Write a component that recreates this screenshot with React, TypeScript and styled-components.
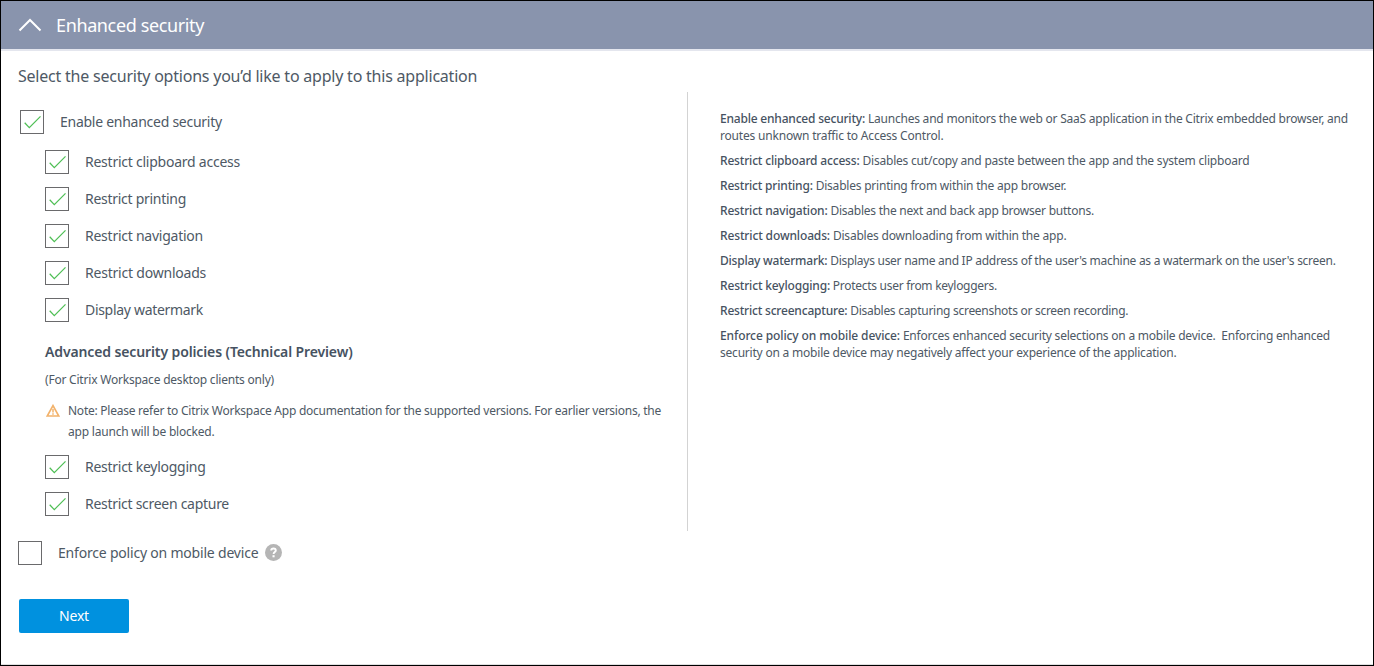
import React, { useState } from 'react';
import styled, { createGlobalStyle } from 'styled-components';

const GlobalStyle = createGlobalStyle`
  *, *::before, *::after { box-sizing: border-box; }
  body { margin: 0; background: #fff; font-family: 'Noto Sans', 'Open Sans', sans-serif; }
`;

const Page = styled.main`
  display: flex;
  flex-direction: column;
  width: 1374px;
  height: 666px;
  border: 1px solid #000;
  background: #fff;
  color: #4e5965;
  box-shadow: inset 0 -1px 0 #dfdfdf;
`;

const Header = styled.header`
  display: flex;
  align-items: center;
  gap: 14px;
  flex: none;
  height: 50px;
  padding-left: 17px;
  background: #8994ad;
  border-bottom: 2px solid #e4e6ee;
  color: #fff;
`;

const Chevron = styled.svg`
  display: block;
  width: 24px;
  height: 16px;
  fill: none;
  stroke: #fff;
  stroke-width: 2;
`;

const Title = styled.h1`
  margin: 0;
  font-size: 18px;
  font-weight: 400;
  line-height: 24px;
  letter-spacing: -0.372px;
`;

const Body = styled.div`
  flex: 1;
  padding: 15px 0 0 17px;
`;

const Intro = styled.p`
  margin: 0;
  height: 26px;
  font-size: 16px;
  line-height: 20px;
  letter-spacing: -0.219px;
`;

const Columns = styled.div`
  display: flex;
  height: 439px;
`;

const Options = styled.section`
  width: 670px;
  border-right: 1px solid #d3d3d3;
  padding: 18px 0 0 2px;
`;

const Nested = styled.div`
  display: flex;
  flex-direction: column;
  gap: 13px;
  padding-left: 25px;
`;

const Restrictions = styled(Nested)`
  margin-top: 16px;
`;

const Row = styled.label`
  display: flex;
  align-items: center;
  height: 24px;
  gap: 16px;
  cursor: pointer;
`;

const HiddenInput = styled.input`
  display: none;
`;

const Box = styled.span`
  display: block;
  flex: none;
  width: 24px;
  height: 24px;
  border: 1px solid #6a6a6c;
  background: #fff;
`;

const Tick = styled.svg`
  display: block;
  width: 22px;
  height: 22px;
  fill: none;
  stroke: #4fbf55;
  stroke-width: 1.25;
`;

const Text = styled.span<{ $track: number }>`
  font-size: 14px;
  line-height: 20px;
  white-space: nowrap;
  letter-spacing: ${(p) => p.$track}px;
`;

const AdvancedTitle = styled.h2`
  margin: 20px 0 0 25px;
  font-size: 14px;
  font-weight: 600;
  line-height: 20px;
  letter-spacing: -0.12px;
  color: #465261;
`;

const AdvancedHint = styled.p`
  margin: 9px 0 0 25px;
  font-size: 12px;
  line-height: 18px;
  letter-spacing: -0.21px;
`;

const Note = styled.div`
  display: flex;
  gap: 8px;
  margin: 11px 0 13px 26px;
`;

const WarningIcon = styled.svg`
  display: block;
  flex: none;
  width: 14px;
  height: 13px;
  margin-top: 4px;
  fill: none;
  stroke: #f2b26b;
  stroke-width: 1.7;
`;

const Line = styled.span<{ $track: number }>`
  display: block;
  white-space: pre;
  letter-spacing: ${(p) => p.$track}px;
`;

const NoteText = styled.p`
  margin: 0;
  font-size: 12px;
  line-height: 21px;
`;

const Help = styled.section`
  display: flex;
  flex-direction: column;
  gap: 8px;
  padding: 18px 0 0 32px;
  font-size: 12px;
  line-height: 17px;
`;

const Entry = styled.p`
  margin: 0;
`;

const Term = styled.strong<{ $track: number }>`
  font-weight: 500;
  color: #465261;
  letter-spacing: ${(p) => p.$track}px;
`;

const MobileRow = styled.div`
  display: flex;
  align-items: center;
  gap: 7px;
  margin-top: 10px;
`;

const HelpIcon = styled.svg`
  display: block;
  width: 17px;
  height: 17px;
  margin-bottom: 1px;
`;

const NextButton = styled.button`
  display: block;
  width: 110px;
  height: 34px;
  margin: 34px 0 0 1px;
  padding: 0;
  border: 0;
  border-radius: 2px;
  background: #0091df;
  color: #fff;
  font: 400 14px/20px 'Noto Sans', 'Open Sans', sans-serif;
  letter-spacing: -0.18px;
`;

interface CheckOptionProps {
  label: string;
  track: number;
  defaultChecked?: boolean;
}

function CheckOption({ label, track, defaultChecked = true }: CheckOptionProps) {
  const [checked, setChecked] = useState(defaultChecked);
  return (
    <Row>
      <HiddenInput type="checkbox" checked={checked} onChange={() => setChecked(!checked)} />
      <Box>
        {checked && (
          <Tick viewBox="0 0 22 22">
            <path d="M3.7 11.8 L8.3 16.6 L19.5 5.4" />
          </Tick>
        )}
      </Box>
      <Text $track={track}>{label}</Text>
    </Row>
  );
}

const restrictions: CheckOptionProps[] = [
  { label: 'Restrict clipboard access', track: -0.241 },
  { label: 'Restrict printing', track: -0.28 },
  { label: 'Restrict navigation', track: -0.245 },
  { label: 'Restrict downloads', track: -0.21 },
  { label: 'Display watermark', track: -0.305 },
];

const advanced: CheckOptionProps[] = [
  { label: 'Restrict keylogging', track: -0.268 },
  { label: 'Restrict screen capture', track: -0.282 },
];

interface HelpEntry {
  term: string;
  termTrack: number;
  lines: [string, number][];
}

const helpEntries: HelpEntry[] = [
  {
    term: 'Enable enhanced security:',
    termTrack: -0.203,
    lines: [
      ['Launches and monitors the web or SaaS application in the Citrix embedded browser, and', -0.217],
      ['routes unknown traffic to Access Control.', -0.188],
    ],
  },
  {
    term: 'Restrict clipboard access:',
    termTrack: -0.178,
    lines: [['Disables cut/copy and paste between the app and the system clipboard', -0.205]],
  },
  {
    term: 'Restrict printing:',
    termTrack: -0.19,
    lines: [['Disables printing from within the app browser.', -0.215]],
  },
  {
    term: 'Restrict navigation:',
    termTrack: -0.177,
    lines: [['Disables the next and back app browser buttons.', -0.239]],
  },
  {
    term: 'Restrict downloads:',
    termTrack: -0.134,
    lines: [['Disables downloading from within the app.', -0.204]],
  },
  {
    term: 'Display watermark:',
    termTrack: -0.22,
    lines: [["Displays user name and IP address of the user's machine as a watermark on the user's screen.", -0.272]],
  },
  {
    term: 'Restrict keylogging:',
    termTrack: -0.172,
    lines: [['Protects user from keyloggers.', -0.287]],
  },
  {
    term: 'Restrict screencapture:',
    termTrack: -0.2,
    lines: [['Disables capturing screenshots or screen recording.', -0.278]],
  },
  {
    term: 'Enforce policy on mobile device:',
    termTrack: -0.108,
    lines: [
      ['Enforces enhanced security selections on a mobile device.  Enforcing enhanced', -0.222],
      ['security on a mobile device may negatively affect your experience of the application.', -0.208],
    ],
  },
];

export default function App() {
  return (
    <>
      <GlobalStyle />
      <Page>
        <Header>
          <Chevron viewBox="0 0 24 16">
            <path d="M1.5 13.5 L12 3 L22.5 13.5" />
          </Chevron>
          <Title>Enhanced security</Title>
        </Header>
        <Body>
          <Intro>Select the security options you’d like to apply to this application</Intro>
          <Columns>
            <Options>
              <CheckOption label="Enable enhanced security" track={-0.265} />
              <Restrictions>
                {restrictions.map((o) => (
                  <CheckOption key={o.label} {...o} />
                ))}
              </Restrictions>
              <AdvancedTitle>Advanced security policies (Technical Preview)</AdvancedTitle>
              <AdvancedHint>(For Citrix Workspace desktop clients only)</AdvancedHint>
              <Note>
                <WarningIcon viewBox="0 0 14 13">
                  <path d="M7 1.6 L12.8 12 H1.2 Z" />
                  <path d="M7 5 V8.4 M7 9.2 V10.7" strokeWidth="1.5" />
                </WarningIcon>
                <NoteText>
                  <Line $track={-0.249}>
                    Note: Please refer to Citrix Workspace App documentation for the supported versions. For earlier versions, the
                  </Line>
                  <Line $track={-0.2}>app launch will be blocked.</Line>
                </NoteText>
              </Note>
              <Nested>
                {advanced.map((o) => (
                  <CheckOption key={o.label} {...o} />
                ))}
              </Nested>
            </Options>
            <Help>
              {helpEntries.map(({ term, termTrack, lines }) => (
                <Entry key={term}>
                  {lines.map(([text, track], i) => (
                    <Line key={text} $track={track}>
                      {i === 0 && <Term $track={termTrack}>{term}</Term>}
                      {i === 0 && ' '}
                      {text}
                    </Line>
                  ))}
                </Entry>
              ))}
            </Help>
          </Columns>
          <MobileRow>
            <CheckOption label="Enforce policy on mobile device" track={-0.2} defaultChecked={false} />
            <HelpIcon viewBox="0 0 17 17">
              <circle cx="8.5" cy="8.5" r="8.5" fill="#b5b5b5" />
              <path d="M6.2 6.5 C6.3 3.9 10.8 3.9 10.8 6.5 C10.8 8.1 8.6 8 8.6 10" fill="none" stroke="#fff" strokeWidth="1.9" />
              <rect x="7.5" y="11.2" width="2.1" height="2.1" fill="#fff" />
            </HelpIcon>
          </MobileRow>
          <NextButton type="button">Next</NextButton>
        </Body>
      </Page>
    </>
  );
}
